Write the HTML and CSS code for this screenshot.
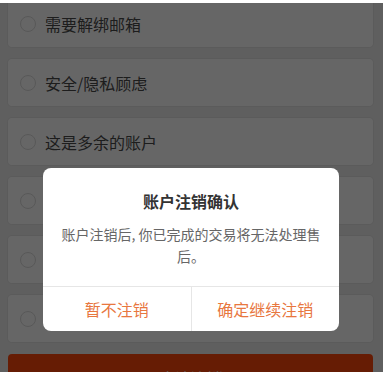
FILE: index.html
```html
<!DOCTYPE html>
<html lang="zh-CN">
<head>
<meta charset="utf-8">
<title>账户注销</title>
<link rel="stylesheet" href="styles.css">
</head>
<body>
<div class="screen">
  <div class="list">
    <div class="card"><span class="radio"></span><span class="label">需要解绑邮箱</span></div>
    <div class="card"><span class="radio"></span><span class="label">安全/隐私顾虑</span></div>
    <div class="card"><span class="radio"></span><span class="label">这是多余的账户</span></div>
    <div class="card"><span class="radio"></span></div>
    <div class="card"><span class="radio"></span></div>
    <div class="card"><span class="radio"></span></div>
    <div class="primary">确认注销</div>
  </div>
  <div class="mask"></div>
  <div class="dialog">
    <div class="dialog-body">
      <div class="dialog-title">账户注销确认</div>
      <div class="dialog-msg">账户注销后, 你已完成的交易将无法处理售后。</div>
    </div>
    <div class="dialog-actions">
      <div class="action">暂不注销</div>
      <div class="action">确定继续注销</div>
    </div>
  </div>
</div>
</body>
</html>
```

FILE: styles.css
```css
html, body {
  margin: 0;
  padding: 0;
}
body {
  width: 390px;
  height: 372px;
  background: #ffffff;
  overflow: hidden;
  font-family: "Noto Sans CJK SC", "Noto Sans", sans-serif;
}
.screen {
  margin-top: 3px;
  width: 383px;
  height: 369px;
  position: relative;
  overflow: hidden;
  background: #ededed;
}
.list {
  margin-top: -3px;
  padding: 0 10px 0 8px;
  display: flex;
  flex-direction: column;
  gap: 12px;
}
.card {
  height: 47px;
  box-sizing: border-box;
  background: #ffffff;
  border-radius: 4px;
  box-shadow: 0 0 0 1px #e4e4e4;
  display: flex;
  align-items: center;
  padding-left: 12px;
  gap: 9px;
}
.radio {
  width: 16px;
  height: 16px;
  box-sizing: border-box;
  border: 1px solid #dcdcdc;
  border-radius: 50%;
  flex: none;
}
.label {
  font-size: 16px;
  color: #4a4a4a;
  line-height: 22px;
}
.primary {
  height: 48px;
  border-radius: 4px;
  background: #ff470c;
  color: #ffffff;
  font-size: 16px;
  display: flex;
  align-items: center;
  justify-content: center;
}
.mask {
  position: absolute;
  inset: 0;
  background: rgba(0, 0, 0, 0.6);
}
.dialog {
  position: absolute;
  left: 43px;
  top: 165px;
  width: 296px;
  background: #ffffff;
  border-radius: 8px;
  overflow: hidden;
}
.dialog-body {
  padding: 22px 16px 19px;
  text-align: center;
}
.dialog-title {
  font-size: 16px;
  font-weight: bold;
  line-height: 22px;
  color: #333333;
}
.dialog-msg {
  margin-top: 11px;
  font-size: 14px;
  line-height: 22px;
  color: #666666;
}
.dialog-actions {
  display: flex;
  border-top: 1px solid #e6e6e6;
  height: 44px;
}
.action {
  flex: 1;
  display: flex;
  align-items: center;
  justify-content: center;
  font-size: 16px;
  color: #e8773f;
}
.action + .action {
  border-left: 1px solid #e6e6e6;
}
```
